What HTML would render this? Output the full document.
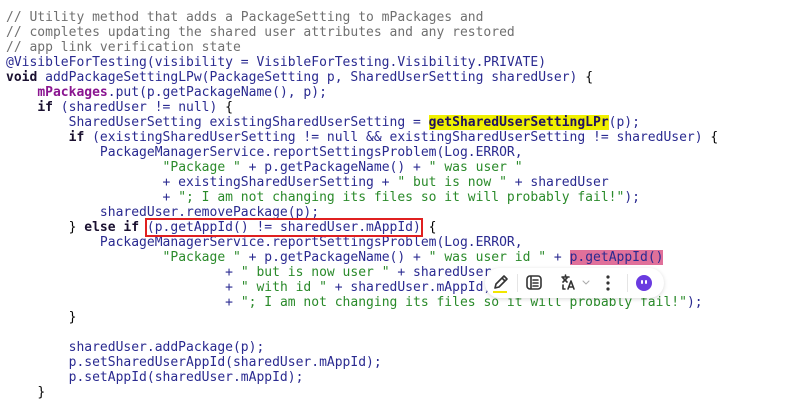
<!DOCTYPE html>
<html><head><meta charset="utf-8"><style>
html,body{margin:0;padding:0;background:#fff;width:797px;height:415px;overflow:hidden;position:relative}
pre{position:absolute;left:6px;top:9.5px;margin:0;font-family:"DejaVu Sans Mono","Liberation Mono",monospace;font-size:13px;line-height:15px;color:#2a2a90}
.c{color:#707070}.k{color:#1a1030;font-weight:bold}.s{color:#2a8a2a}.b{color:#000}
.m{color:#8a1590;font-weight:bold}.y{background:#f0f000;font-weight:bold;color:#201060}
.p{background:#e0709a}.r{outline:2px solid #e02020;outline-offset:0}
.tb{position:absolute;left:485px;top:268px;width:179px;height:30px;background:#fff;border-radius:15px;box-shadow:0 1px 4px rgba(0,0,0,.15)}
</style></head><body>
<pre><span class="c">// Utility method that adds a PackageSetting to mPackages and
// completes updating the shared user attributes and any restored
// app link verification state</span>
@VisibleForTesting(visibility = VisibleForTesting.Visibility.PRIVATE)
<span class="k">void</span> addPackageSettingLPw(PackageSetting p, SharedUserSetting sharedUser) <span class="b">{</span>
    <span class="m">mPackages</span>.put(p.getPackageName(), p);
    <span class="k">if</span> (sharedUser != null) <span class="b">{</span>
        SharedUserSetting existingSharedUserSetting = <span class="y">getSharedUserSettingLPr</span>(p);
        <span class="k">if</span> (existingSharedUserSetting != null &amp;&amp; existingSharedUserSetting != sharedUser) <span class="b">{</span>
            PackageManagerService.reportSettingsProblem(Log.ERROR,
                    <span class="s">"Package "</span> + p.getPackageName() + <span class="s">" was user "</span>
                    + existingSharedUserSetting + <span class="s">" but is now "</span> + sharedUser
                    + <span class="s">"; I am not changing its files so it will probably fail!"</span>);
            sharedUser.removePackage(p);
        <span class="b">}</span> <span class="k">else if</span> <span class="r">(p.getAppId() != sharedUser.mAppId)</span> <span class="b">{</span>
            PackageManagerService.reportSettingsProblem(Log.ERROR,
                    <span class="s">"Package "</span> + p.getPackageName() + <span class="s">" was user id "</span> + <span class="p">p.getAppId()</span>
                            + <span class="s">" but is now user "</span> + sharedUser
                            + <span class="s">" with id "</span> + sharedUser.mAppId);
                            + <span class="s">"; I am not changing its files so it will probably fail!"</span>);
        <span class="b">}</span>

        sharedUser.addPackage(p);
        p.setSharedUserAppId(sharedUser.mAppId);
        p.setAppId(sharedUser.mAppId);
    <span class="b">}</span>
</pre>
<div class="tb">
<svg width="179" height="30" viewBox="0 0 179 30" style="position:absolute;left:0;top:0">
 <g transform="translate(2,0)">
 <g fill="none" stroke="#333" stroke-width="1.6" stroke-linejoin="round" stroke-linecap="round">
  <path d="M8 20 L9 16 L17 8 L20 11 L12 19 Z M15 10 L18 13"/>
  <rect x="40" y="8" width="14" height="13" rx="3"/>
  <path d="M44 9 V20 M46 12 H51 M46 15 H51 M46 18 H51"/>
  <path d="M75 9 H82 M78.5 7 V9 M76 14 L80 10 M76 10 L80 14 M76 17 V21 H78"/>
  <path d="M81 21 L84 13 L87 21 M82 19 H86"/>
  <path d="M96 13 L99 16 L102 13" stroke="#aaa" stroke-width="1"/>
 </g>
 <rect x="6" y="23" width="14" height="2" fill="#f2e600"/>
 <rect x="30" y="6" width="1" height="18" fill="#e5e5e5"/>
 <rect x="140" y="6" width="1" height="18" fill="#e5e5e5"/>
 <circle cx="121" cy="9" r="1.6" fill="#333"/><circle cx="121" cy="15" r="1.6" fill="#333"/><circle cx="121" cy="21" r="1.6" fill="#333"/>
 <circle cx="157" cy="15" r="8" fill="#6a3be0"/>
 <rect x="154" y="12" width="2" height="4" rx="1" fill="#fff"/><rect x="158" y="12" width="2" height="4" rx="1" fill="#fff"/>
 </g>
</svg>
</div>
</body></html>
